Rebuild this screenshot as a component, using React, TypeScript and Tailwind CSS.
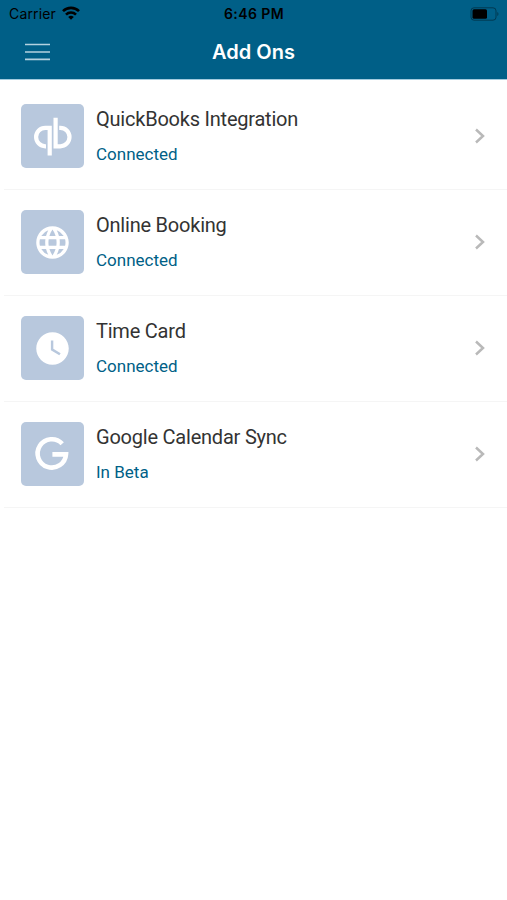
import type { ReactNode } from "react";
import { MdLanguage, MdWatchLater } from "react-icons/md";

type AddOn = {
  name: string;
  status: string;
  icon: ReactNode;
};

function QuickBooksIcon() {
  return (
    <svg width="40" height="40" viewBox="0 0 40 40" fill="none" stroke="white" strokeWidth="4.2">
      <path d="M14 30.3H13.3a9.2 9.2 0 0 1 0-18.4H17.7V39.5" />
      <path d="M27.2 11.9H28.3a9.2 9.2 0 0 1 0 18.4H23.6V1.8" />
    </svg>
  );
}

function GoogleIcon() {
  return (
    <svg width="40" height="40" viewBox="0 0 40 40" fill="none" stroke="white" strokeWidth="4.6">
      <path d="M30.2 9.7A14.2 14.2 0 1 0 34 20.4H20.4" />
    </svg>
  );
}

function MenuIcon() {
  return (
    <svg width="25" height="18" viewBox="0 0 25 18" fill="none" stroke="#b4d2e0" strokeWidth="1.6">
      <path d="M0 1.5h25M0 9h25M0 16.4h25" />
    </svg>
  );
}

const addOns: AddOn[] = [
  { name: "QuickBooks Integration", status: "Connected", icon: <QuickBooksIcon /> },
  { name: "Online Booking", status: "Connected", icon: <MdLanguage size={39} /> },
  { name: "Time Card", status: "Connected", icon: <MdWatchLater size={39} /> },
  { name: "Google Calendar Sync", status: "In Beta", icon: <GoogleIcon /> },
];

function StatusBar() {
  return (
    <div className="grid h-[27px] grid-cols-3 items-center pl-[9px] pr-[8px] font-['Inter',sans-serif] text-black">
      <div className="flex items-center gap-[6px] text-[14px] tracking-[0.15px]">
        <span>Carrier</span>
        <svg className="-mt-[2px]" width="18" height="14" viewBox="0 0 18 14" fill="none" stroke="black" strokeWidth="2.6">
          <path d="M1 5.2a11.3 11.3 0 0 1 16 0" />
          <path d="M4 8.6a7 7 0 0 1 10 0" />
          <path d="M9 13.8 6.2 11a4 4 0 0 1 5.6 0z" fill="black" stroke="none" />
        </svg>
      </div>
      <span className="text-center text-[14px] font-semibold tracking-[0.4px]">6:46 PM</span>
      <svg className="justify-self-end" width="29" height="14" viewBox="0 0 29 14">
        <rect x="1" y="0.8" width="25" height="12.4" rx="3" fill="none" stroke="black" strokeOpacity="0.4" />
        <rect x="2.5" y="2.3" width="14.5" height="9.4" rx="1.5" fill="black" />
        <path d="M27.3 5a2.3 2.3 0 0 1 0 4z" fill="black" fillOpacity="0.4" />
      </svg>
    </div>
  );
}

function AddOnRow({ name, status, icon }: AddOn) {
  return (
    <li className="ml-[4px] flex h-[106px] items-center border-b border-[#f5f5f5] pl-[16.5px] pr-[21px]">
      <div className="mb-[1px] flex size-[63.5px] shrink-0 items-center justify-center rounded-[5px] bg-[#b8c8dd] text-white">
        {icon}
      </div>
      <div className="mb-[3px] ml-[12px] flex-1">
        <h2 className="text-[20px] leading-[28px] tracking-[-0.22px] text-[#333333]">{name}</h2>
        <p className="mt-[9px] text-[17px] leading-[24px] text-[#005f87]">{status}</p>
      </div>
      <svg className="mb-[1px]" width="12" height="18" viewBox="0 0 12 18" fill="none" stroke="#b9b9b9" strokeWidth="2.5">
        <path d="M2 2.5 9 9l-7 6.5" />
      </svg>
    </li>
  );
}

export default function App() {
  return (
    <div className="min-h-screen bg-white font-['Roboto',sans-serif]">
      <header className="h-[80px] border-b border-[#a3cbde] bg-[#005f87]">
        <StatusBar />
        <div className="grid h-[50px] grid-cols-3 items-center px-[25px]">
          <button className="w-[25px]" aria-label="Menu">
            <MenuIcon />
          </button>
          <h1 className="text-center font-['Inter',sans-serif] text-[20px] font-semibold text-white">Add Ons</h1>
        </div>
      </header>
      <ul className="pt-[4px]">
        {addOns.map((addOn) => (
          <AddOnRow key={addOn.name} {...addOn} />
        ))}
      </ul>
    </div>
  );
}
